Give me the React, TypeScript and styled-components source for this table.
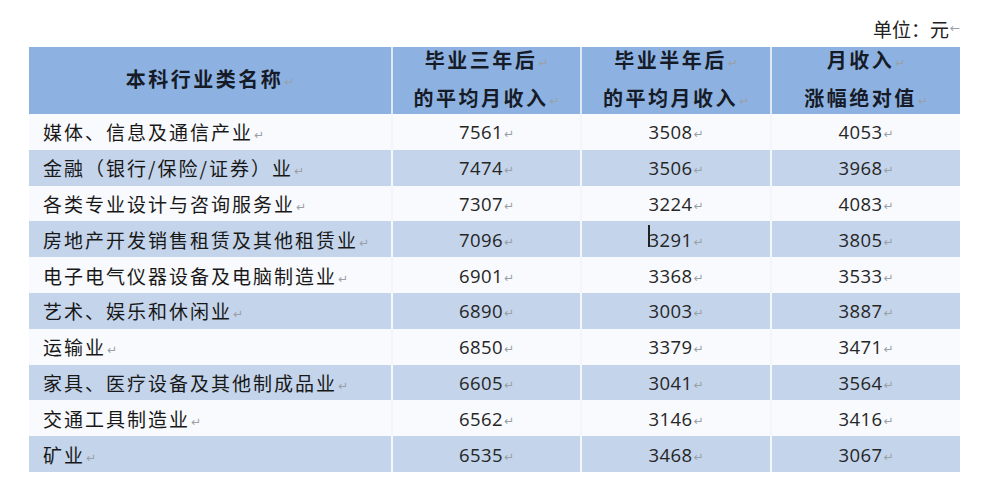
import React from 'react';
import styled, { createGlobalStyle } from 'styled-components';

const GlobalStyle = createGlobalStyle`
  html, body {
    margin: 0;
    padding: 0;
    background: #ffffff;
  }
  body {
    font-family: "Noto Sans CJK SC", "Noto Sans", sans-serif;
    color: #1c1c1c;
  }
`;

const Page = styled.div`
  width: 988px;
  height: 498px;
  padding: 14px 0 0 29px;
  box-sizing: border-box;
  background: #ffffff;
`;

const Unit = styled.div`
  width: 931px;
  height: 33px;
  display: flex;
  justify-content: flex-end;
  align-items: center;
  font-size: 19px;
  color: #222;
  line-height: 22px;
  padding-bottom: 4px;
  box-sizing: border-box;
`;

const Table = styled.div`
  width: 931px;
  display: grid;
  grid-template-columns: 362px 189px 190px 190px;
`;

const HeadCell = styled.div<{ first?: boolean }>`
  height: 67px;
  background: #8db2e1;
  border-left: ${(p) => (p.first ? 'none' : '2px solid #dfe9f5')};
  box-sizing: border-box;
  display: flex;
  flex-direction: column;
  align-items: center;
  justify-content: center;
  font-weight: 700;
  font-size: 20px;
  letter-spacing: 2.5px;
  line-height: 34px;
  color: #161b28;
`;

const Cell = styled.div<{ shade: boolean; first?: boolean }>`
  height: 35.8px;
  box-sizing: border-box;
  background: ${(p) => (p.shade ? '#c4d4ea' : '#f8fafd')};
  border-left: ${(p) => (p.first ? 'none' : p.shade ? '2px solid #f4f7fb' : '2px solid #f2f5fa')};
  display: flex;
  align-items: center;
  justify-content: ${(p) => (p.first ? 'flex-start' : 'center')};
  padding-left: ${(p) => (p.first ? '14px' : '0')};
  position: relative;
`;

const Name = styled.span`
  font-size: 19px;
  letter-spacing: 2px;
  color: #181818;
`;

const Num = styled.span`
  font-family: "Open Sans", "Liberation Sans", sans-serif;
  font-size: 18.5px;
  letter-spacing: 0.4px;
  color: #262626;
  position: relative;
`;

const Mark = styled.span`
  font-family: "DejaVu Sans", sans-serif;
  font-size: 12px;
  color: #9aa0a8;
  margin-left: 1px;
  letter-spacing: 0;
  font-weight: 400;
  position: relative;
  top: -1px;
`;

const Caret = styled.span`
  position: absolute;
  left: -1px;
  top: -2px;
  width: 2px;
  height: 22px;
  background: #222;
`;

const rows: [string, string, string, string][] = [
  ['媒体、信息及通信产业', '7561', '3508', '4053'],
  ['金融（银行/保险/证券）业', '7474', '3506', '3968'],
  ['各类专业设计与咨询服务业', '7307', '3224', '4083'],
  ['房地产开发销售租赁及其他租赁业', '7096', '3291', '3805'],
  ['电子电气仪器设备及电脑制造业', '6901', '3368', '3533'],
  ['艺术、娱乐和休闲业', '6890', '3003', '3887'],
  ['运输业', '6850', '3379', '3471'],
  ['家具、医疗设备及其他制成品业', '6605', '3041', '3564'],
  ['交通工具制造业', '6562', '3146', '3416'],
  ['矿业', '6535', '3468', '3067'],
];

export default function App() {
  return (
    <Page>
      <GlobalStyle />
      <Unit>
        单位：元<Mark>←</Mark>
      </Unit>
      <Table>
        <HeadCell first>
          <div>
            本科行业类名称<Mark>↵</Mark>
          </div>
        </HeadCell>
        <HeadCell>
          <div>
            毕业三年后<Mark>↵</Mark>
          </div>
          <div>
            的平均月收入<Mark>↵</Mark>
          </div>
        </HeadCell>
        <HeadCell>
          <div>
            毕业半年后<Mark>↵</Mark>
          </div>
          <div>
            的平均月收入<Mark>↵</Mark>
          </div>
        </HeadCell>
        <HeadCell>
          <div>
            月收入<Mark>↵</Mark>
          </div>
          <div>
            涨幅绝对值<Mark>↵</Mark>
          </div>
        </HeadCell>
        {rows.map((r, i) => {
          const shade = i % 2 === 1;
          return (
            <React.Fragment key={r[0]}>
              <Cell shade={shade} first>
                <Name>
                  {r[0]}
                  <Mark>↵</Mark>
                </Name>
              </Cell>
              {r.slice(1).map((v, j) => (
                <Cell shade={shade} key={j}>
                  <Num>
                    {i === 3 && j === 1 && <Caret />}
                    {v}
                    <Mark>↵</Mark>
                  </Num>
                </Cell>
              ))}
            </React.Fragment>
          );
        })}
      </Table>
    </Page>
  );
}
